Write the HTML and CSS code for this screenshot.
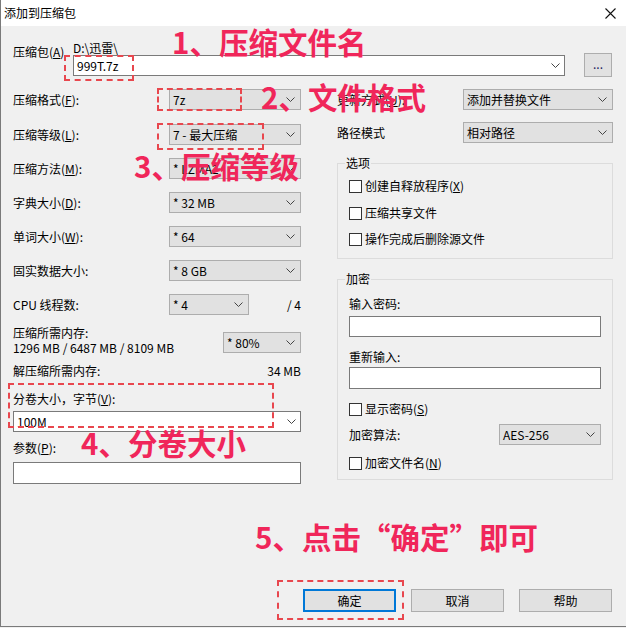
FILE: index.html
```html
<!DOCTYPE html>
<html lang="zh-CN">
<head>
<meta charset="utf-8">
<title>添加到压缩包</title>
<link rel="stylesheet" href="styles.css">
</head>
<body>
<div class="window">
  <div class="titlebar">
    <span class="title">添加到压缩包</span>
    <svg class="close" width="11" height="11" viewBox="0 0 11 11"><path d="M0.5 0.5L10.5 10.5M10.5 0.5L0.5 10.5" stroke="#111" stroke-width="1.1" fill="none"/></svg>
  </div>
  <div class="content">
    <div class="archive-row">
      <span class="archive-label">压缩包(<u>A</u>)</span>
      <div class="archive-field">
        <div class="path">D:\迅雷\</div>
        <div class="combo white">
          <span>999T.7z</span>
          <svg class="chev" width="9" height="5" viewBox="0 0 9 5"><path d="M0.5 0.5L4.5 4.5L8.5 0.5" stroke="#444" fill="none"/></svg>
        </div>
      </div>
      <div class="browse">...</div>
    </div>

    <div class="columns">
      <div class="left">
        <div class="lrow">
          <span>压缩格式(<u>F</u>):</span>
          <div class="combo sel w132"><span>7z</span><svg class="chev" width="9" height="5" viewBox="0 0 9 5"><path d="M0.5 0.5L4.5 4.5L8.5 0.5" stroke="#444" fill="none"/></svg></div>
        </div>
        <div class="lrow m14">
          <span>压缩等级(<u>L</u>):</span>
          <div class="combo sel w132"><span>7 - 最大压缩</span><svg class="chev" width="9" height="5" viewBox="0 0 9 5"><path d="M0.5 0.5L4.5 4.5L8.5 0.5" stroke="#444" fill="none"/></svg></div>
        </div>
        <div class="lrow m13">
          <span>压缩方法(<u>M</u>):</span>
          <div class="combo sel w132"><span>* LZMA2</span><svg class="chev" width="9" height="5" viewBox="0 0 9 5"><path d="M0.5 0.5L4.5 4.5L8.5 0.5" stroke="#444" fill="none"/></svg></div>
        </div>
        <div class="lrow m13">
          <span>字典大小(<u>D</u>):</span>
          <div class="combo sel w132"><span>* 32 MB</span><svg class="chev" width="9" height="5" viewBox="0 0 9 5"><path d="M0.5 0.5L4.5 4.5L8.5 0.5" stroke="#444" fill="none"/></svg></div>
        </div>
        <div class="lrow m13">
          <span>单词大小(<u>W</u>):</span>
          <div class="combo sel w132"><span>* 64</span><svg class="chev" width="9" height="5" viewBox="0 0 9 5"><path d="M0.5 0.5L4.5 4.5L8.5 0.5" stroke="#444" fill="none"/></svg></div>
        </div>
        <div class="lrow m13">
          <span>固实数据大小:</span>
          <div class="combo sel w132"><span>* 8 GB</span><svg class="chev" width="9" height="5" viewBox="0 0 9 5"><path d="M0.5 0.5L4.5 4.5L8.5 0.5" stroke="#444" fill="none"/></svg></div>
        </div>
        <div class="lrow m13">
          <span class="cpu-label">CPU 线程数:</span>
          <div class="combo sel w80"><span>* 4</span><svg class="chev" width="9" height="5" viewBox="0 0 9 5"><path d="M0.5 0.5L4.5 4.5L8.5 0.5" stroke="#444" fill="none"/></svg></div>
          <span class="push">/ 4</span>
        </div>
        <div class="memrow">
          <div class="memtext">
            <div>压缩所需内存:</div>
            <div>1296 MB / 6487 MB / 8109 MB</div>
          </div>
          <div class="combo sel w78 memsel"><span>* 80%</span><svg class="chev" width="9" height="5" viewBox="0 0 9 5"><path d="M0.5 0.5L4.5 4.5L8.5 0.5" stroke="#444" fill="none"/></svg></div>
        </div>
        <div class="textrow m9">
          <span>解压缩所需内存:</span>
          <span>34 MB</span>
        </div>
        <div class="label m14">分卷大小，字节(<u>V</u>):</div>
        <div class="combo white m5">
          <span>100M</span>
          <svg class="chev" width="9" height="5" viewBox="0 0 9 5"><path d="M0.5 0.5L4.5 4.5L8.5 0.5" stroke="#444" fill="none"/></svg>
        </div>
        <div class="label m9">参数(<u>P</u>):</div>
        <div class="input h22 m7"></div>
      </div>

      <div class="right">
        <div class="rrow">
          <span>更新方式(<u>U</u>):</span>
          <div class="combo sel w150"><span>添加并替换文件</span><svg class="chev" width="9" height="5" viewBox="0 0 9 5"><path d="M0.5 0.5L4.5 4.5L8.5 0.5" stroke="#444" fill="none"/></svg></div>
        </div>
        <div class="rrow m12">
          <span>路径模式</span>
          <div class="combo sel w150"><span>相对路径</span><svg class="chev" width="9" height="5" viewBox="0 0 9 5"><path d="M0.5 0.5L4.5 4.5L8.5 0.5" stroke="#444" fill="none"/></svg></div>
        </div>

        <div class="group g1">
          <span class="legend">选项</span>
          <div class="check m9"><span class="cb"></span><span>创建自释放程序(<u>X</u>)</span></div>
          <div class="check m13"><span class="cb"></span><span>压缩共享文件</span></div>
          <div class="check m12"><span class="cb"></span><span>操作完成后删除源文件</span></div>
        </div>

        <div class="group g2">
          <span class="legend">加密</span>
          <div class="label m11">输入密码:</div>
          <div class="input h21 m5"></div>
          <div class="label m13">重新输入:</div>
          <div class="input h22 m3"></div>
          <div class="check m13"><span class="cb"></span><span>显示密码(<u>S</u>)</span></div>
          <div class="rrow m8">
            <span>加密算法:</span>
            <div class="combo sel w102"><span>AES-256</span><svg class="chev" width="9" height="5" viewBox="0 0 9 5"><path d="M0.5 0.5L4.5 4.5L8.5 0.5" stroke="#444" fill="none"/></svg></div>
          </div>
          <div class="check m11"><span class="cb"></span><span>加密文件名(<u>N</u>)</span></div>
        </div>
      </div>
    </div>

    <div class="buttons">
      <div class="btn default">确定</div>
      <div class="btn">取消</div>
      <div class="btn">帮助</div>
    </div>
  </div>

  <div class="note n1">1、压缩文件名</div>
  <div class="note n2">2、文件格式</div>
  <div class="note n3">3、压缩等级</div>
  <div class="note n4">4、分卷大小</div>
  <div class="note n5">5、点击“确定”即可</div>

  <div class="dash d1"></div>
  <div class="dash d2"></div>
  <div class="dash d3"></div>
  <div class="dash d4"></div>
  <div class="dash d5"></div>
</div>
</body>
</html>
```

FILE: styles.css
```css
* { box-sizing: border-box; }

html { background: #f0f0f0; }

body {
  margin: 0;
  font-family: "Noto Sans CJK SC", "Microsoft YaHei", sans-serif;
  font-size: 12px;
  line-height: 14px;
  color: #000;
}

.window {
  position: relative;
  width: 626px;
  height: 627px;
  background: #f0f0f0;
  border-left: 1px solid #7a7a7a;
  border-bottom: 1px solid #7a7a7a;
  overflow: hidden;
}

.titlebar {
  height: 26px;
  background: #fff;
  display: flex;
  align-items: center;
  padding: 0 10px 0 3px;
}

.title { font-size: 12px; }

.close { margin-left: auto; }

.content {
  padding: 0 13px 0 12px;
}

/* archive row */
.archive-row {
  display: flex;
  align-items: flex-start;
  margin-top: 15px;
}

.archive-label {
  width: 60px;
  margin-top: 4px;
}

.archive-field { width: 492px; }

.path { height: 14px; }

.browse {
  width: 28px;
  height: 24px;
  margin-top: 12px;
  margin-left: 19px;
  background: #e1e1e1;
  border: 1px solid #adadad;
  text-align: center;
  line-height: 20px;
  color: #22205e;
}

/* combos */
.combo {
  display: flex;
  align-items: center;
  height: 21px;
  padding: 0 5px 0 3px;
  border: 1px solid #adadad;
  background: #e1e1e1;
  white-space: nowrap;
}

.combo .chev { margin-left: auto; flex: none; }

.combo.white {
  background: #fff;
  border-color: #7a7a7a;
  padding-right: 4px;
}

.w132 { width: 132px; }
.w80 { width: 80px; }
.w78 { width: 78px; }
.w150 { width: 150px; }
.w102 { width: 102px; }

.input {
  background: #fff;
  border: 1px solid #7a7a7a;
}

.h21 { height: 21px; }
.h22 { height: 22px; }

.m3 { margin-top: 3px; }
.m5 { margin-top: 5px; }
.m7 { margin-top: 7px; }
.m8 { margin-top: 8px; }
.m9 { margin-top: 9px; }
.m11 { margin-top: 11px; }
.m12 { margin-top: 12px; }
.m13 { margin-top: 13px; }
.m14 { margin-top: 14px; }

/* columns */
.columns {
  display: flex;
  gap: 36px;
  margin-top: 12px;
  height: 395px;
}

.left { width: 288px; flex: none; }
.right { width: 276px; flex: none; }

.lrow, .rrow {
  display: flex;
  align-items: center;
  justify-content: space-between;
  height: 21px;
}

.cpu-label { width: 156px; }
.lrow .push { margin-left: auto; }

.memrow {
  display: flex;
  justify-content: space-between;
  align-items: flex-start;
  margin-top: 10px;
  height: 30px;
}

.memtext { line-height: 15px; }
.memsel { margin-top: 7px; }

.textrow {
  display: flex;
  justify-content: space-between;
  height: 14px;
}

.label { height: 14px; }

/* groups */
.group {
  border: 1px solid #dcdcdc;
  padding: 0 11px;
}

.g1 { margin-top: 20px; padding-bottom: 12px; }
.g2 { margin-top: 20px; padding-bottom: 9px; }

.legend {
  display: block;
  width: fit-content;
  height: 14px;
  margin: -8px 0 0 -4px;
  padding: 0 1px;
  background: #f0f0f0;
}

.check {
  display: flex;
  align-items: center;
  height: 14px;
}

.cb {
  width: 13px;
  height: 13px;
  border: 1px solid #333;
  background: #fff;
  margin-right: 3px;
  flex: none;
}

/* buttons */
.buttons {
  display: flex;
  justify-content: flex-end;
  gap: 15px;
  margin-top: 105px;
  padding-right: 1px;
}

.btn {
  width: 93px;
  height: 23px;
  background: #e1e1e1;
  border: 1px solid #adadad;
  display: flex;
  align-items: center;
  justify-content: center;
}

.btn.default { border: 2px solid #0078d7; }

/* annotations */
.note {
  position: absolute;
  font-size: 29.5px;
  line-height: 29px;
  font-weight: 700;
  color: #f0265a;
  white-space: nowrap;
}

.n1 { left: 171px; top: 27px; }
.n2 { left: 260px; top: 82px; }
.n3 { left: 133px; top: 151px; }
.n4 { left: 80px; top: 428px; }
.n5 { left: 254px; top: 522px; }

.dash {
  position: absolute;
  border: 2px dashed #e8474e;
}

.d1 { left: 63px; top: 55px; width: 70px; height: 26px; }
.d2 { left: 156px; top: 88px; width: 85px; height: 23px; }
.d3 { left: 156px; top: 123px; width: 107px; height: 27px; }
.d4 { left: 7px; top: 383px; width: 266px; height: 45px; }
.d5 { left: 276px; top: 580px; width: 127px; height: 40px; }
```
